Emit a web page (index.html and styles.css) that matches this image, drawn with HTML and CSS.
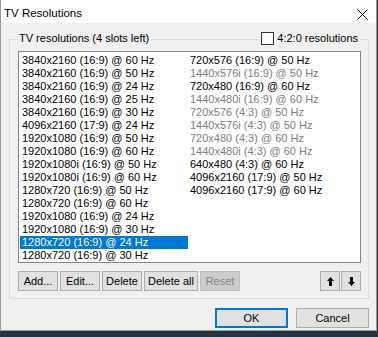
FILE: index.html
```html
<!DOCTYPE html>
<html>
<head>
<meta charset="utf-8">
<link rel="stylesheet" href="styles.css">
</head>
<body>
<div class="window">
  <div class="titlebar">
    <span class="title">TV Resolutions</span>
    <svg class="close" width="11" height="11" viewBox="0 0 11 11"><path d="M0.5 0.5 L10.5 10.5 M10.5 0.5 L0.5 10.5" stroke="#000" stroke-width="1" fill="none"/></svg>
  </div>
  <div class="client">
    <div class="group">
      <div class="group-head">
        <span class="legend">TV resolutions (4 slots left)</span>
        <label class="check"><span class="box"></span><span class="check-text">4:2:0 resolutions</span></label>
      </div>
      <div class="list">
        <div class="item">3840x2160 (16:9) @ 60 Hz</div>
        <div class="item">3840x2160 (16:9) @ 50 Hz</div>
        <div class="item">3840x2160 (16:9) @ 24 Hz</div>
        <div class="item">3840x2160 (16:9) @ 25 Hz</div>
        <div class="item">3840x2160 (16:9) @ 30 Hz</div>
        <div class="item">4096x2160 (17:9) @ 24 Hz</div>
        <div class="item">1920x1080 (16:9) @ 50 Hz</div>
        <div class="item">1920x1080 (16:9) @ 60 Hz</div>
        <div class="item">1920x1080i (16:9) @ 50 Hz</div>
        <div class="item">1920x1080i (16:9) @ 60 Hz</div>
        <div class="item">1280x720 (16:9) @ 50 Hz</div>
        <div class="item">1280x720 (16:9) @ 60 Hz</div>
        <div class="item">1920x1080 (16:9) @ 24 Hz</div>
        <div class="item">1920x1080 (16:9) @ 30 Hz</div>
        <div class="item selected">1280x720 (16:9) @ 24 Hz</div>
        <div class="item">1280x720 (16:9) @ 30 Hz</div>
        <div class="item">720x576 (16:9) @ 50 Hz</div>
        <div class="item gray">1440x576i (16:9) @ 50 Hz</div>
        <div class="item">720x480 (16:9) @ 60 Hz</div>
        <div class="item gray">1440x480i (16:9) @ 60 Hz</div>
        <div class="item gray">720x576 (4:3) @ 50 Hz</div>
        <div class="item gray">1440x576i (4:3) @ 50 Hz</div>
        <div class="item gray">720x480 (4:3) @ 60 Hz</div>
        <div class="item gray">1440x480i (4:3) @ 60 Hz</div>
        <div class="item">640x480 (4:3) @ 60 Hz</div>
        <div class="item">4096x2160 (17:9) @ 50 Hz</div>
        <div class="item">4096x2160 (17:9) @ 60 Hz</div>
      </div>
      <div class="btnrow">
        <div class="btngroup">
          <button class="btn w40">Add...</button>
          <button class="btn w40">Edit...</button>
          <button class="btn w40">Delete</button>
          <button class="btn w54">Delete all</button>
          <button class="btn w40 disabled">Reset</button>
        </div>
        <div class="btngroup tight">
          <button class="btn arrow"><svg width="7" height="9" viewBox="0 0 7 9"><path d="M3.5 0 L7 4 H5 V9 H2 V4 H0 Z" fill="#000"/></svg></button>
          <button class="btn arrow"><svg width="7" height="9" viewBox="0 0 7 9"><path d="M3.5 9 L7 5 H5 V0 H2 V5 H0 Z" fill="#000"/></svg></button>
        </div>
      </div>
    </div>
    <div class="dlg-btns">
      <button class="btn dlg default">OK</button>
      <button class="btn dlg">Cancel</button>
    </div>
  </div>
</div>
</body>
</html>
```

FILE: styles.css
```css
html, body {
  margin: 0;
  padding: 0;
}
body {
  background: #263342;
  width: 378px;
  height: 337px;
  overflow: hidden;
  font-family: "Liberation Sans", Arial, sans-serif;
  font-size: 11px;
  color: #000;
}
.window {
  width: 377px;
  height: 331px;
  box-sizing: border-box;
  background: #f0f0f0;
  border-left: 1px solid #9a9a9a;
  border-right: 1px solid #9a9a9a;
  border-bottom: 1px solid #9a9a9a;
  display: flex;
  flex-direction: column;
}
.titlebar {
  height: 23px;
  box-sizing: border-box;
  background: #fff;
  display: flex;
  align-items: flex-start;
  justify-content: space-between;
  padding: 3px 0 0 3px;
}
.title {
  font-size: 11.5px;
  line-height: 20px;
}
.close {
  margin: 6px 8px 0 0;
}
.client {
  padding: 16px 7px 0 8px;
}
.group {
  border: 1px solid #dcdcdc;
  height: 260px;
  box-sizing: border-box;
  padding: 0 7px 7px 8px;
  display: flex;
  flex-direction: column;
}
.group-head {
  margin-top: -8px;
  height: 13px;
  display: flex;
  justify-content: space-between;
  padding: 0 1px 0 0;
  line-height: 13px;
}
.legend {
  background: #f0f0f0;
  padding: 0 2px 0 1px;
}
.check {
  background: #f0f0f0;
  display: flex;
  align-items: center;
  padding: 0 2px 0 2px;
}
.box {
  width: 13px;
  height: 13px;
  box-sizing: border-box;
  border: 1px solid #333;
  background: #fff;
  margin-right: 3px;
}
.check-text {
  line-height: 13px;
}
.list {
  margin-top: 6px;
  height: 212px;
  box-sizing: border-box;
  border: 1px solid #828790;
  background: #fff;
  padding: 2px 0 0 1px;
  display: grid;
  grid-template-rows: repeat(16, 13px);
  grid-auto-flow: column;
  grid-auto-columns: 168px;
  justify-content: start;
  align-content: start;
}
.item {
  line-height: 13px;
  padding-left: 2px;
  white-space: nowrap;
}
.item.gray {
  color: #7e7e7e;
}
.item.selected {
  background: #0078d7;
  color: #fff;
}
.btnrow {
  margin-top: 8px;
  display: flex;
  justify-content: space-between;
}
.btngroup {
  display: flex;
  gap: 2px;
}
.btngroup.tight {
  gap: 1px;
}
.btn {
  font-family: "Liberation Sans", Arial, sans-serif;
  font-size: 11px;
  color: #000;
  height: 20px;
  box-sizing: border-box;
  border: 1px solid #adadad;
  background: #e1e1e1;
  padding: 0;
  margin: 0;
  display: flex;
  align-items: center;
  justify-content: center;
  line-height: 13px;
}
.w40 { width: 40px; }
.w54 { width: 54px; }
.arrow { width: 20px; }
.btn.disabled {
  background: #cccccc;
  border-color: #bfbfbf;
  color: #838383;
}
.dlg-btns {
  margin-top: 9px;
  display: flex;
  justify-content: flex-end;
  gap: 8px;
}
.btn.dlg {
  width: 73px;
  height: 20px;
}
.btn.default {
  border: 2px solid #0078d7;
}
```
